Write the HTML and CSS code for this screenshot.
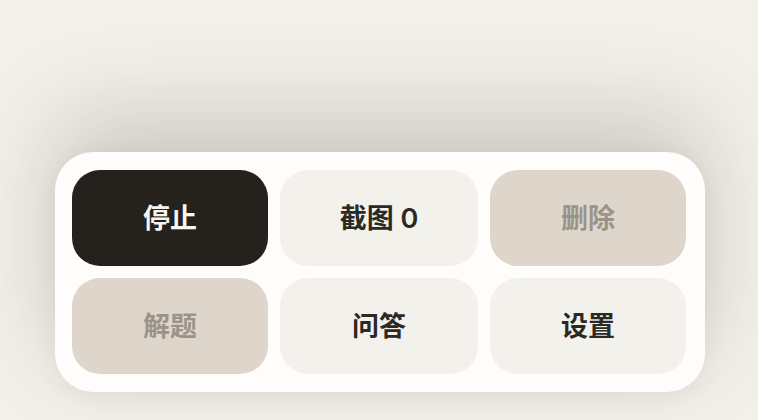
FILE: index.html
```html
<!DOCTYPE html>
<html lang="zh-CN">
<head>
<meta charset="utf-8">
<title>控制面板</title>
<link rel="stylesheet" href="styles.css">
</head>
<body>
<main class="stage">
  <section class="panel">
    <button class="btn btn-dark">停止</button>
    <button class="btn btn-light">截图 0</button>
    <button class="btn btn-muted">删除</button>
    <button class="btn btn-muted">解题</button>
    <button class="btn btn-light">问答</button>
    <button class="btn btn-light">设置</button>
  </section>
</main>
</body>
</html>
```
FILE: styles.css
```css
html, body {
  margin: 0;
  padding: 0;
}
body {
  width: 758px;
  height: 420px;
  background: #f3f0ea;
  font-family: "Inter", "Noto Sans CJK SC", sans-serif;
  overflow: hidden;
}
.stage {
  height: 420px;
  box-sizing: border-box;
  display: flex;
  flex-direction: column;
  justify-content: flex-end;
  align-items: center;
  padding: 0 0 28px 2px;
}
.panel {
  width: 650px;
  height: 240px;
  box-sizing: border-box;
  padding: 18px 19px 18px 17px;
  background: #fefdfb;
  border-radius: 38px;
  display: grid;
  grid-template-columns: 196px 198px 196px;
  grid-template-rows: 96px 96px;
  column-gap: 12px;
  row-gap: 12px;
  box-shadow: 0 -36px 90px rgba(70, 60, 45, 0.22), 0 6px 24px rgba(70, 60, 45, 0.06);
}
.btn {
  border: none;
  border-radius: 28px;
  font-family: inherit;
  font-size: 27px;
  font-weight: 600;
  display: flex;
  align-items: center;
  justify-content: center;
  padding: 0 0 3px 0;
  cursor: pointer;
}
.btn-dark {
  background: #25221d;
  color: #f7f5f0;
}
.btn-light {
  background: #f3f1ec;
  color: #2b2924;
}
.btn-muted {
  background: #ded6ca;
  color: #9b9389;
}
```
